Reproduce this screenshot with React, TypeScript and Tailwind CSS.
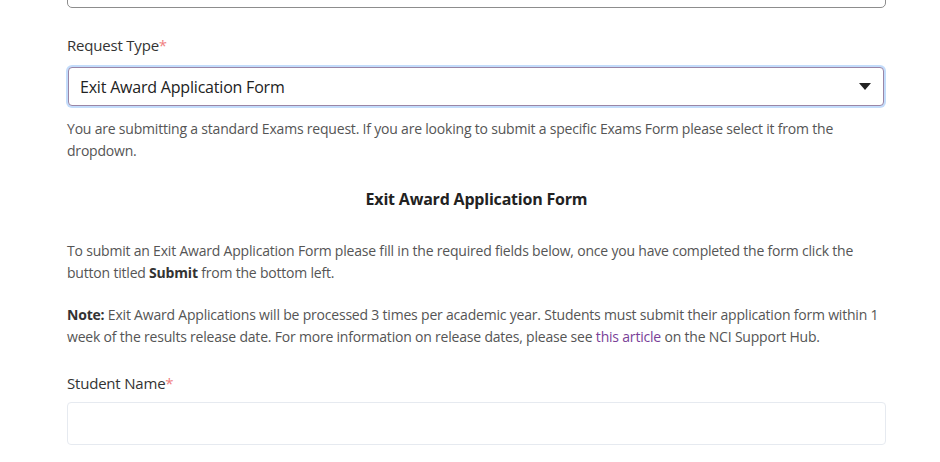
export default function App() {
  return (
    <div
      className="min-h-screen bg-white tracking-[-0.2px] text-[#555]"
      style={{ fontFamily: '"Open Sans", "Noto Sans", sans-serif' }}
    >
      <div className="mx-[67px] mr-[54px] -mt-[40px]">
        {/* previous field, cut off at top */}
        <div className="h-[48px] rounded-[5px] border border-[#8d8d8d]" />

        {/* Request Type */}
        <div className="mt-[26px]">
          <label className="block text-[15px] leading-[22px] text-[#333]">
            Request Type<span className="text-[#f08080]">*</span>
          </label>
          <div className="-ml-[1px] mt-[9px] rounded-[6px] bg-[#c3dcfb] p-[2px]">
            <div className="flex h-[39px] items-center justify-between rounded-[4px] border border-[#9a86a6] bg-white pl-[11px] pr-[11px]">
              <span className="text-[16px] text-[#222]">Exit Award Application Form</span>
              <svg width="12" height="7" viewBox="0 0 12 7" className="mr-[1px]">
                <path d="M0 0h12L6 7z" fill="#222" />
              </svg>
            </div>
          </div>
          <p className="mt-[10px] text-[14px] leading-[22px]">
            You are submitting a standard Exams request. If you are looking to submit a specific Exams Form please select it from the dropdown.
          </p>
        </div>

        <h2 className="mt-[25px] text-center text-[16px] font-bold leading-[24px] text-[#222]">
          Exit Award Application Form
        </h2>

        <p className="mt-[29px] text-[14px] leading-[22px]">
          To submit an Exit Award Application Form please fill in the required fields below, once you have completed the form click the button titled{" "}
          <strong className="font-bold text-[#333]">Submit</strong> from the bottom left.
        </p>

        <p className="mt-[20px] text-[14px] leading-[22px]">
          <strong className="font-bold text-[#333]">Note:</strong> Exit Award Applications will be processed 3 times per academic year. Students must submit their application form within 1 week of the results release date. For more information on release dates, please see{" "}
          <a className="text-[#7a3f98]">this article</a> on the NCI Support Hub.
        </p>

        {/* Student Name */}
        <div className="mt-[24px]">
          <label className="block text-[15px] leading-[22px] text-[#333]">
            Student Name<span className="text-[#f08080]">*</span>
          </label>
          <div className="mt-[8px] h-[43px] rounded-[4px] border border-[#e6eaf0] bg-white" />
        </div>
      </div>
    </div>
  );
}
